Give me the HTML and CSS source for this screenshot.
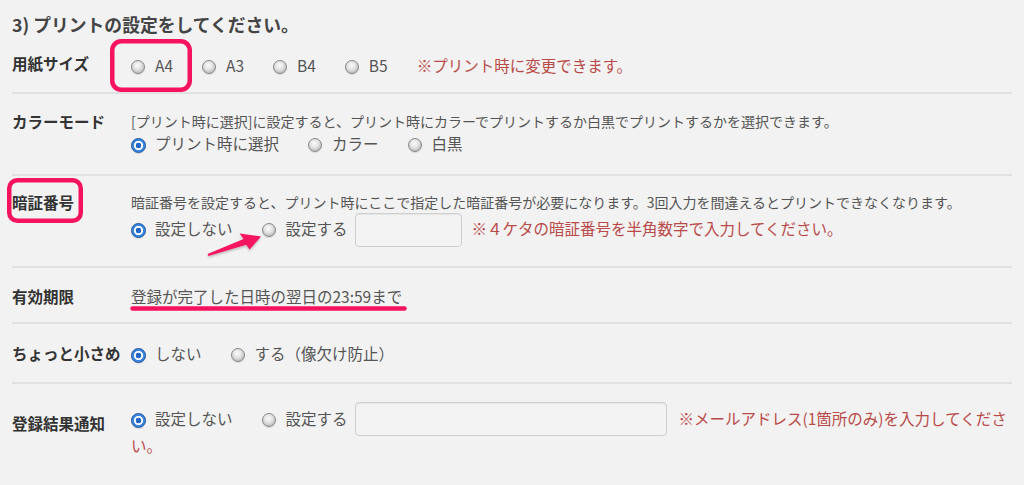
FILE: index.html
```html
<!DOCTYPE html>
<html lang="ja">
<head>
<meta charset="utf-8">
<title>プリントの設定</title>
<link rel="stylesheet" href="styles.css">
</head>
<body>
<div class="page">
  <h2 class="title">3) プリントの設定をしてください。</h2>

  <div class="row r-size">
    <div class="label">用紙サイズ</div>
    <div class="body"><label class="opt"><input type="radio" name="size">A4</label><label class="opt"><input type="radio" name="size">A3</label><label class="opt"><input type="radio" name="size">B4</label><label class="opt"><input type="radio" name="size">B5</label><span class="note">※プリント時に変更できます。</span></div>
  </div>

  <div class="row r-color">
    <div class="label">カラーモード</div>
    <div class="body">
      <div class="desc">[プリント時に選択]に設定すると、プリント時にカラーでプリントするか白黒でプリントするかを選択できます。</div>
      <div class="line"><label class="opt"><input type="radio" name="color" checked>プリント時に選択</label><label class="opt"><input type="radio" name="color">カラー</label><label class="opt"><input type="radio" name="color">白黒</label></div>
    </div>
  </div>

  <div class="row r-pin">
    <div class="label">暗証番号</div>
    <div class="body">
      <div class="desc">暗証番号を設定すると、プリント時にここで指定した暗証番号が必要になります。3回入力を間違えるとプリントできなくなります。</div>
      <div class="line field-line"><label class="opt"><input type="radio" name="pin" checked>設定しない</label><label class="opt tight"><input type="radio" name="pin">設定する</label><input class="field pin" type="text"><span class="note">※４ケタの暗証番号を半角数字で入力してください。</span></div>
    </div>
  </div>

  <div class="row r-expire">
    <div class="label">有効期限</div>
    <div class="body">登録が完了した日時の翌日の23:59まで</div>
  </div>

  <div class="row r-small">
    <div class="label">ちょっと小さめ</div>
    <div class="body"><label class="opt"><input type="radio" name="small" checked>しない</label><label class="opt"><input type="radio" name="small">する（像欠け防止）</label></div>
  </div>

  <div class="row r-notify">
    <div class="label">登録結果通知</div>
    <div class="body field-line"><label class="opt"><input type="radio" name="notify" checked>設定しない</label><label class="opt tight"><input type="radio" name="notify">設定する</label><input class="field mail" type="text"><span class="note">※メールアドレス(1箇所のみ)を入力してください。</span></div>
  </div>

  <svg class="marks" width="1024" height="485" viewBox="0 0 1024 485" aria-hidden="true">
    <defs>
      <filter id="sh" x="-10%" y="-20%" width="120%" height="150%">
        <feDropShadow dx="0" dy="1.5" stdDeviation="1.2" flood-color="#000" flood-opacity="0.25"/>
      </filter>
    </defs>
    <rect x="112.25" y="41.25" width="77.5" height="48.5" rx="9" fill="none" stroke="#f5125e" stroke-width="4.5"/>
    <rect x="9.25" y="180.25" width="71.5" height="40.5" rx="8" fill="none" stroke="#f5125e" stroke-width="4.5"/>
    <line x1="132.5" y1="308.5" x2="404.5" y2="308.5" stroke="#f5125e" stroke-width="4.5" stroke-linecap="round"/>
    <polygon filter="url(#sh)" fill="#f5125e" points="207.6,253.9 243.6,239.0 239.6,233.6 261,236.5 249.6,249.4 246.2,244.8 208.4,256.1"/>
  </svg>
</div>
</body>
</html>
```

FILE: styles.css
```css
html, body {
  margin: 0;
  padding: 0;
  background: #f2f2f2;
}

.page {
  position: relative;
  height: 485px;
  overflow: hidden;
  padding: 0 12px;
  font-family: "Noto Sans CJK JP", "Noto Sans", sans-serif;
  color: #555;
}

.title {
  margin: 0;
  padding-top: 12px;
  font-size: 17.8px;
  line-height: 24px;
  font-weight: bold;
  color: #444;
}

.row {
  display: flex;
  border-bottom: 2px solid #e1e1e1;
}

.label {
  flex: none;
  width: 119px;
  font-size: 15.5px;
  line-height: 20px;
  font-weight: bold;
  color: #333;
}

.body {
  flex: 1;
  min-width: 0;
  font-size: 15.5px;
  line-height: 24px;
}

.desc {
  font-size: 14px;
  line-height: 20px;
}

.opt {
  margin-right: 29px;
  white-space: nowrap;
}

.opt.tight {
  margin-right: 7px;
}

.opt input {
  -webkit-appearance: none;
  appearance: none;
  box-sizing: border-box;
  width: 14px;
  height: 14px;
  margin: 0 10px 0 0;
  border-radius: 50%;
  vertical-align: -2px;
  border: 1px solid #888888;
  background: radial-gradient(circle at 45% 38%, #fbfbfb 0, #e2e2e2 42%, #a8a8a8 92%);
  box-shadow: 0 1px 1px rgba(0, 0, 0, 0.1);
}

.opt input:checked {
  width: 15px;
  height: 15px;
  margin-right: 9px;
  vertical-align: -2.5px;
  border: 1px solid #184f9c;
  background: radial-gradient(circle, #1f66c6 0 2.6px, #ffffff 3.1px 4.3px, #3a88df 4.8px);
}

.note {
  color: #b94a48;
}

.field {
  box-sizing: border-box;
  height: 34px;
  margin: 0 10px 0 0;
  padding: 0;
  border: 1px solid #cfcfcf;
  border-radius: 4px;
  background: #f3f3f3;
  box-shadow: inset 0 1px 1px rgba(0, 0, 0, 0.06);
  vertical-align: middle;
}

.field.pin {
  width: 107px;
  margin-top: -2px;
}

.field.mail {
  width: 312px;
  margin-right: 12px;
  margin-top: -4px;
}

.field-line {
  line-height: 22px;
}

/* row spacing */
.r-size {
  padding: 17px 0 15px;
}

.r-color {
  padding: 17px 0 19px;
}
.r-color .line {
  line-height: 24px;
}

.r-pin {
  padding: 16px 0 19px;
}
.r-pin .line {
  margin-top: 3px;
}

.r-expire {
  padding: 16px 0 14px;
}
.r-expire .label {
  line-height: 24px;
}

.r-small {
  padding: 17px 0 17px;
}
.r-small .label {
  line-height: 24px;
}

.r-notify {
  padding: 22px 0 30px;
  border-bottom: none;
}
.r-notify .body {
  line-height: 18px;
}
.r-notify .label {
  margin-top: 7px;
}

.marks {
  position: absolute;
  left: 0;
  top: 0;
  pointer-events: none;
}
```
